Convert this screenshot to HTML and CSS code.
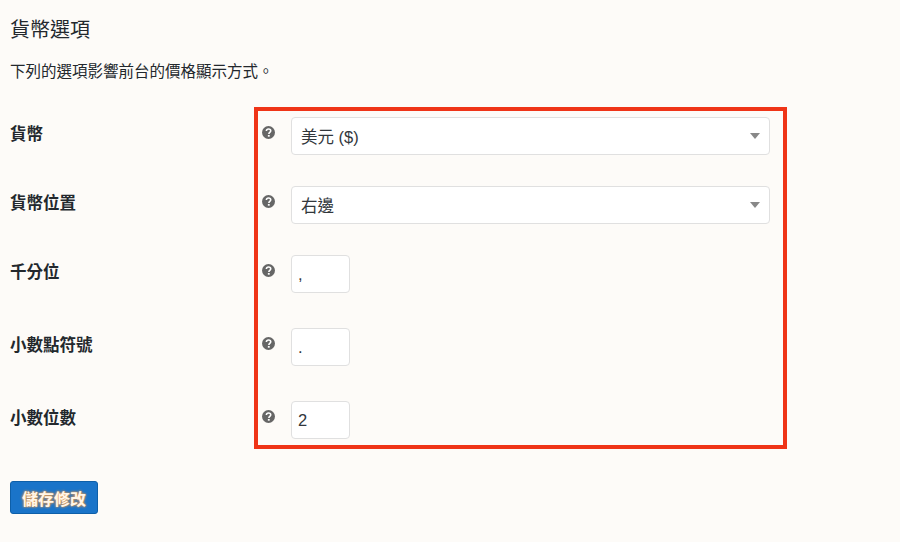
FILE: index.html
```html
<!DOCTYPE html>
<html lang="zh-Hant">

<head>
  <meta charset="UTF-8">
  <meta name="viewport" content="width=device-width, initial-scale=1.0">
  <title>貨幣選項</title>
  <link rel="stylesheet" href="styles.css">
</head>

<body>
  <h2 class="section-title">貨幣選項</h2>
  <p class="section-desc">下列的選項影響前台的價格顯示方式。</p>

  <!-- Settings rows -->
  <form class="settings">
    <div class="highlight-frame"></div>

    <div class="row row-select">
      <label class="row-label">貨幣</label>
      <svg class="help-icon" viewBox="0 0 14 14"><circle cx="7" cy="7" r="7" /><path d="M4.7 5.4C4.8 4 5.8 3.2 7.1 3.2c1.3 0 2.3.8 2.3 2 0 1.8-2 1.700-2 3.300" /><rect x="6.300" y="9.700" width="2" height="1.800" /></svg>
      <div class="fake-select"><span>美元 ($)</span><i class="caret"></i></div>
    </div>

    <div class="row row-select">
      <label class="row-label">貨幣位置</label>
      <svg class="help-icon" viewBox="0 0 14 14"><circle cx="7" cy="7" r="7" /><path d="M4.7 5.4C4.8 4 5.8 3.2 7.1 3.2c1.3 0 2.3.8 2.3 2 0 1.8-2 1.700-2 3.300" /><rect x="6.300" y="9.700" width="2" height="1.800" /></svg>
      <div class="fake-select"><span>右邊</span><i class="caret"></i></div>
    </div>

    <div class="row row-input">
      <label class="row-label">千分位</label>
      <svg class="help-icon" viewBox="0 0 14 14"><circle cx="7" cy="7" r="7" /><path d="M4.7 5.4C4.8 4 5.8 3.2 7.1 3.2c1.3 0 2.3.8 2.3 2 0 1.8-2 1.700-2 3.300" /><rect x="6.300" y="9.700" width="2" height="1.800" /></svg>
      <input class="small-input" type="text" value=",">
    </div>

    <div class="row row-input">
      <label class="row-label">小數點符號</label>
      <svg class="help-icon" viewBox="0 0 14 14"><circle cx="7" cy="7" r="7" /><path d="M4.7 5.4C4.8 4 5.8 3.2 7.1 3.2c1.3 0 2.3.8 2.3 2 0 1.8-2 1.700-2 3.300" /><rect x="6.300" y="9.700" width="2" height="1.800" /></svg>
      <input class="small-input" type="text" value=".">
    </div>

    <div class="row row-input">
      <label class="row-label">小數位數</label>
      <svg class="help-icon" viewBox="0 0 14 14"><circle cx="7" cy="7" r="7" /><path d="M4.7 5.4C4.8 4 5.8 3.2 7.1 3.2c1.3 0 2.3.8 2.3 2 0 1.8-2 1.700-2 3.300" /><rect x="6.300" y="9.700" width="2" height="1.800" /></svg>
      <input class="small-input" type="text" value="2">
    </div>

    <button class="save-btn" type="button">儲存修改</button>
  </form>
</body>

</html>
```

FILE: styles.css
```css
html,
body {
  height: 100%;
}

body {
  margin: 0;
  padding: 0 10px;
  box-sizing: border-box;
  overflow: hidden;
  background-color: #fdfbf8;
  color: #23282d;
  font-family: "Liberation Sans", "Noto Sans CJK TC", sans-serif;
  font-size: 14px;
}

/* Heading and intro */
.section-title {
  margin: 0;
  padding-top: 19px;
  height: 23px;
  line-height: 23px;
  font-size: 20px;
  font-weight: 400;
}

.section-desc {
  margin: 0;
  padding-top: 20px;
  height: 20px;
  line-height: 20px;
  font-size: 15.500px;
}

/* Settings rows */
.settings {
  position: relative;
  margin-top: 35px;
}

.row {
  display: flex;
  align-items: flex-start;
}

.row-select {
  height: 69px;
}

.row-input {
  height: 73px;
}

.row-label {
  width: 252px;
  padding-top: 7px;
  line-height: 20px;
  font-size: 16.500px;
  font-weight: 700;
}

.help-icon {
  width: 13px;
  height: 13px;
  margin-top: 9px;
  margin-right: 16px;
  flex: none;
}

.help-icon circle {
  fill: #666;
}

.help-icon path {
  fill: none;
  stroke: #fff;
  stroke-width: 1.700;
}

.help-icon rect {
  fill: #fff;
}

/* Form controls */
.fake-select {
  display: flex;
  align-items: center;
  justify-content: space-between;
  width: 479px;
  height: 38px;
  padding: 0 9px 0 9px;
  box-sizing: border-box;
  border: 1px solid #e0e0e0;
  border-radius: 4px;
  background-color: #fff;
  font-size: 16.500px;
  color: #32373c;
}

.caret {
  width: 0;
  height: 0;
  border-left: 5px solid transparent;
  border-right: 5px solid transparent;
  border-top: 6px solid #888;
}

.small-input {
  width: 59px;
  height: 38px;
  padding: 0 6px;
  box-sizing: border-box;
  border: 1px solid #e0e0e0;
  border-radius: 4px;
  background-color: #fff;
  font-family: "Liberation Sans", sans-serif;
  font-size: 16.500px;
  color: #32373c;
}

.save-btn {
  display: block;
  width: 88px;
  height: 33px;
  margin-top: 7px;
  padding: 0;
  border: 1px solid #0e5fa8;
  border-radius: 3px;
  background-color: #1a74c9;
  color: #fff6e8;
  font-family: inherit;
  font-size: 16px;
  font-weight: 700;
  text-shadow: 0 0 2px #f0a050, 0 0 3px #e89040;
}

/* Annotation drawn over the screenshot */
.highlight-frame {
  position: absolute;
  left: 244px;
  top: -10px;
  width: 525px;
  height: 334px;
  border: 4px solid #ef3417;
  pointer-events: none;
}
```
